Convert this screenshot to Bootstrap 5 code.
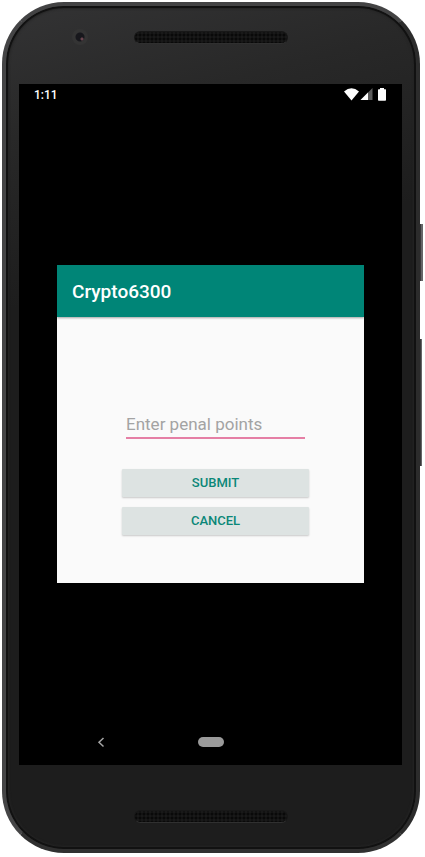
<!DOCTYPE html>
<html lang="en">
<head>
<meta charset="utf-8">
<meta name="viewport" content="width=device-width, initial-scale=1">
<title>Crypto6300</title>
<link rel="stylesheet" href="https://cdn.jsdelivr.net/npm/bootstrap@5.3.0/dist/css/bootstrap.min.css">
<style>
body { font-family: Roboto, "Liberation Sans", sans-serif; background: #fff; }
.stage { padding: 2px 5px 4px 2px; }
.phone {
  min-width: 0;
  border-radius: 62px;
  padding: 0 14px 0 13px;
  border: 4px solid #3c3c3c;
  border-color: #434344 #2c2c2c #303030 #454546;
  background: linear-gradient(165deg, #333334 0%, #282828 14%, #1d1d1d 32%, #1d1d1d 100%);
  box-shadow: inset 0 0 0 2px #111, inset 0 0 2px 3px #242424;
}
.bezel-top { height: 78px; padding-top: 25px; }
.bezel-bottom { height: 84px; padding-top: 45px; }
.grille {
  width: 154px; height: 13px; border-radius: 7px;
  background: #171717 radial-gradient(circle at 2px 2px, #090909 1px, #191919 2px) 3px 1px / 4px 4px;
  border: 1px solid #181818;
  border-bottom-color: #303030;
}
.camera {
  left: 66px; top: 23px; width: 16px; height: 16px; border-radius: 50%;
  background: radial-gradient(circle at 10px 10px, #6b4650 0 1px, transparent 2px), radial-gradient(circle, #17171c 0 4px, #343434 5px);
}
.side-key { left: 100%; margin-left: 4px; background: #666567; border-left: 1px solid #39383a; }
.power { top: 218px; width: 3px; height: 57px; }
.volume { top: 333px; width: 2px; height: 127px; }
.screen { background: #000; }
.status { height: 45px; padding: 4px 15px 0; color: #fff; font-size: 12px; font-weight: 500; line-height: 15px; }
.navbar-keys { height: 46px; }
.key-back { left: 76px; top: 16px; width: 14px; height: 14px; }
.key-home { width: 26px; height: 10px; border-radius: 5px; background: #9a9a9a; }
.window { margin: 0 38px; background: #fafafa; }
.app-title { height: 52px; padding: 2px 15px 0; background: #008577; color: #fff; box-shadow: 0 1px 2px rgba(0,0,0,.35); }
.app-title h1 { font-size: 19px; font-weight: 500; line-height: 24px; }
.points-form { padding: 94px 55px 48px 65px; }
.points-input {
  width: calc(100% - 8px); height: 28px; margin: 0 4px 30px; padding: 0; border: 0; border-bottom: 2px solid #e57fa5;
  border-radius: 0; background: none; font-size: 17px; line-height: 24px; color: #222;
}
.points-input:focus { outline: 0; border-color: #d81b60; }
.points-input::placeholder { color: #a3a3a3; }
.action {
  height: 28px; padding: 0; border: 0; border-radius: 1px; background: #dde3e2; color: #0b8778;
  font-size: 13px; font-weight: 500; line-height: 28px; box-shadow: 0 1px 2px rgba(0,0,0,.2);
}
.action:hover { background: #d2dad8; color: #0b8778; }
.actions { gap: 10px; }
</style>
</head>
<body>
<div class="stage min-vh-100 d-flex">
  <div class="phone position-relative flex-grow-1 d-flex flex-column">
    <div class="bezel-top d-flex justify-content-center">
      <div class="camera position-absolute"></div>
      <div class="grille"></div>
    </div>
    <div class="screen flex-grow-1 d-flex flex-column justify-content-between">
      <div class="status d-flex justify-content-between align-items-start">
        <span>1:11</span>
        <svg width="43" height="14" viewBox="0 0 43 14" aria-label="Wi-Fi, signal, battery" role="img">
          <path d="M0 3.5Q7.500-3 15 3.500L7.500 12.500Z" fill="#fff"/>
          <path d="M28.500 0V12H16.500Z" fill="#5c5c5c"/>
          <path d="M24 4.500V12H16.500Z" fill="#fff"/>
          <path d="M36 0h4v1.300h1.500q.5 0 .5.700v10q0 .8-.8.800h-6.400q-.8 0-.8-.8V2q0-.7.7-.7H36Z" fill="#fff"/>
        </svg>
      </div>
      <main class="window">
        <header class="app-title d-flex align-items-center"><h1 class="m-0">Crypto6300</h1></header>
        <form class="points-form" onsubmit="return false">
          <input class="points-input d-block" type="text" placeholder="Enter penal points" aria-label="Enter penal points">
          <div class="actions d-grid">
            <button class="action btn" type="submit">SUBMIT</button>
            <button class="action btn" type="button">CANCEL</button>
          </div>
        </form>
      </main>
      <nav class="navbar-keys position-relative d-flex align-items-center justify-content-center" aria-label="System">
        <button class="key-back btn p-0 border-0 d-flex position-absolute" type="button" aria-label="Back">
          <svg width="14" height="14" viewBox="0 0 14 14"><path d="M8.500 3L4 7.300L8.500 11.500" fill="none" stroke="#a5a5a5" stroke-width="1.500"/></svg>
        </button>
        <button class="key-home btn p-0 border-0" type="button" aria-label="Home"></button>
      </nav>
    </div>
    <div class="bezel-bottom d-flex justify-content-center"><div class="grille"></div></div>
    <div class="side-key power position-absolute"></div>
    <div class="side-key volume position-absolute"></div>
  </div>
</div>
<script src="https://cdn.jsdelivr.net/npm/bootstrap@5.3.0/dist/js/bootstrap.bundle.min.js"></script>
</body>
</html>
